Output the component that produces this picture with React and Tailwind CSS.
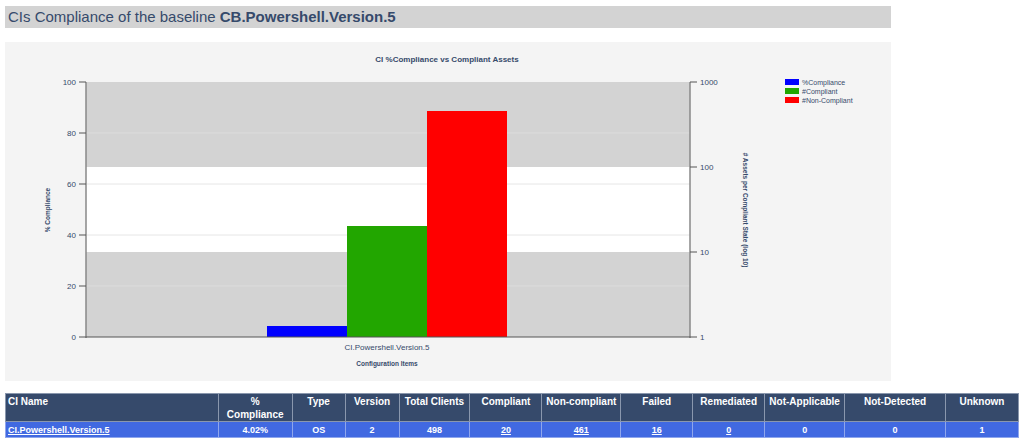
export default function App() {
  const f = { fontFamily: '"Liberation Sans", Arial, sans-serif' };
  const ox = 5, oy = 42;
  const X = (x) => x - ox, Y = (y) => y - oy;
  const leftTicks = [100, 80, 60, 40, 20, 0];
  const cols = [
    ["CI Name", 213, "left"], ["%\nCompliance", 74], ["Type", 53], ["Version", 54], ["Total Clients", 71],
    ["Compliant", 72], ["Non-compliant", 79], ["Failed", 72], ["Remediated", 72], ["Not-Applicable", 80],
    ["Not-Detected", 101], ["Unknown", 73],
  ];
  const row = [["CI.Powershell.Version.5", true], ["4.02%"], ["OS"], ["2"], ["498"], ["20", true], ["461", true], ["16", true], ["0", true], ["0"], ["0"], ["1"]];
  return (
    <div className="w-[1024px] h-[441px] bg-white relative overflow-hidden" style={f}>
      <div className="ml-[5px] mt-[6px] w-[886px] h-[22px] bg-[#d3d3d3] text-[#364a6b] text-[15px] leading-[22px] pl-[3px]">
        CIs Compliance of the baseline <b>CB.Powershell.Version.5</b>
      </div>
      <div className="ml-[5px] mt-[14px] w-[886px] h-[339px] bg-[#f4f4f4]">
        <svg width="886" height="339" style={f}>
          <text x={X(447)} y={Y(62)} textAnchor="middle" fontSize="8" fontWeight="bold" fill="#364a6b">CI %Compliance vs Compliant Assets</text>
          <rect x={X(86)} y={Y(82)} width="604" height="85" fill="#d3d3d3" />
          <rect x={X(86)} y={Y(167)} width="604" height="85" fill="#ffffff" />
          <rect x={X(86)} y={Y(252)} width="604" height="85" fill="#d3d3d3" />
          {[133, 184, 235, 286].map((y) => (
            <line key={y} x1={X(86)} x2={X(690)} y1={Y(y)} y2={Y(y)} stroke={y > 167 && y < 252 ? "#e6e6e6" : "#dcdcdc"} strokeWidth="1" />
          ))}
          <rect x={X(267)} y={Y(326)} width="80" height="11" fill="#0000ff" />
          <rect x={X(347)} y={Y(226)} width="80" height="111" fill="#22a600" />
          <rect x={X(427)} y={Y(111)} width="80" height="226" fill="#ff0000" />
          <line x1={X(86)} x2={X(86)} y1={Y(82)} y2={Y(338)} stroke="#888" strokeWidth="1.5" />
          <line x1={X(690)} x2={X(690)} y1={Y(82)} y2={Y(338)} stroke="#888" strokeWidth="1.5" />
          <line x1={X(86)} x2={X(690)} y1={Y(337)} y2={Y(337)} stroke="#555" strokeWidth="1" />
          {leftTicks.map((t, i) => {
            const y = Y(82 + i * 51);
            return (
              <g key={t}>
                <line x1={X(79)} x2={X(86)} y1={y} y2={y} stroke="#555" />
                <text x={X(76)} y={y + 3} textAnchor="end" fontSize="8" fill="#364a6b">{t}</text>
              </g>
            );
          })}
          {["1000", "100", "10", "1"].map((t, i) => {
            const y = Y(82 + i * 85);
            return (
              <g key={t}>
                <line x1={X(690)} x2={X(697)} y1={y} y2={y} stroke="#555" />
                <text x={X(700)} y={y + 3} fontSize="8" fill="#364a6b">{t}</text>
              </g>
            );
          })}
          <text x={X(387)} y={Y(350)} textAnchor="middle" fontSize="8" fill="#364a6b">CI.Powershell.Version.5</text>
          <text x={X(387)} y={Y(366)} textAnchor="middle" fontSize="6.5" fontWeight="bold" fill="#364a6b">Configuration Items</text>
          <text transform={`translate(${X(50)},${Y(210)}) rotate(-90)`} textAnchor="middle" fontSize="6.5" fontWeight="bold" fill="#364a6b">% Compliance</text>
          <text transform={`translate(${X(743)},${Y(210)}) rotate(90)`} textAnchor="middle" fontSize="6.5" fontWeight="bold" fill="#364a6b"># Assets per Compliant State (log 10)</text>
          {[["#0000ff", "%Compliance"], ["#22a600", "#Compliant"], ["#ff0000", "#Non-Compliant"]].map(([c, l], i) => (
            <g key={l}>
              <rect x={X(785)} y={Y(79 + i * 9)} width="14" height="6" fill={c} />
              <text x={X(802)} y={Y(85 + i * 9)} fontSize="7" fill="#364a6b">{l}</text>
            </g>
          ))}
        </svg>
      </div>
      <table className="ml-[5px] mt-[12px] w-[1014px] border-collapse text-[10px] font-bold text-white">
        <thead>
          <tr className="bg-[#364a6b]">
            {cols.map(([h, w, a]) => (
              <th key={h} style={{ width: w }} className={`border border-[#8a97ad] align-top h-[28px] px-[2px] pt-[1px] leading-[13px] whitespace-pre-line ${a === "left" ? "text-left" : "text-center"}`}>{h}</th>
            ))}
          </tr>
        </thead>
        <tbody>
          <tr className="bg-[#4169e1]">
            {row.map(([v, u], i) => (
              <td key={i} className={`border border-[#8fa6ec] h-[16px] px-[2px] text-[9px] leading-[14px] ${i === 0 ? "text-left" : "text-center"} ${u ? "underline" : ""}`}>{v}</td>
            ))}
          </tr>
        </tbody>
      </table>
    </div>
  );
}
